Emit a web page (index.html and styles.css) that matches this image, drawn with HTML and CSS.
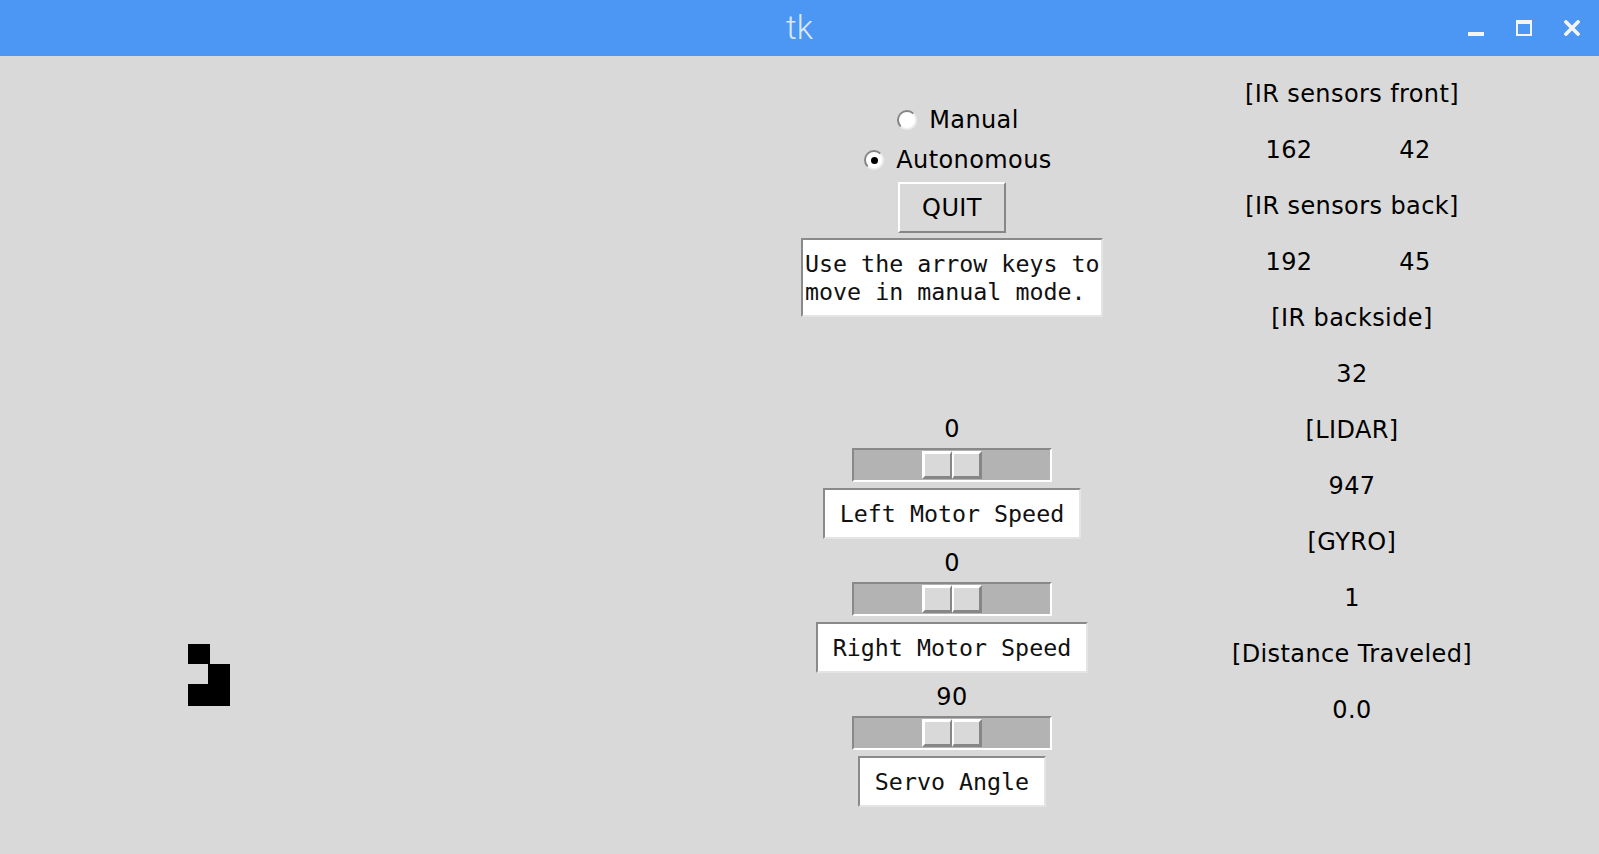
FILE: index.html
```
<!DOCTYPE html>
<html>
<head>
<meta charset="utf-8">
<title>tk</title>
<link rel="stylesheet" href="styles.css">
</head>
<body>
<div class="window">
  <div class="titlebar">
    <div class="tb-spacer"></div>
    <div class="title">tk</div>
    <div class="wm-controls">
      <span class="ctl ctl-min"></span>
      <span class="ctl ctl-max"></span>
      <svg class="ctl ctl-close" width="16" height="16" viewBox="0 0 16 16">
        <path d="M2 2 L14 14 M14 2 L2 14" stroke="#f4f4f4" stroke-width="3.6" stroke-linecap="square" fill="none"/>
      </svg>
    </div>
  </div>
  <div class="main">
    <div class="canvas">
      <svg class="robot" width="42" height="62" viewBox="0 0 42 62" shape-rendering="crispEdges">
        <rect x="0" y="0" width="22" height="20" fill="#000"/>
        <rect x="20" y="20" width="22" height="20" fill="#000"/>
        <rect x="0" y="40" width="42" height="22" fill="#000"/>
      </svg>
    </div>
    <div class="control-col">
      <div class="radio"><span class="radio-ind"></span><span class="sans">Manual</span></div>
      <div class="radio"><span class="radio-ind checked"><span class="dot"></span></span><span class="sans">Autonomous</span></div>
      <div class="button sans">QUIT</div>
      <div class="textbox mono">Use the arrow keys to
move in manual mode.</div>
      <div class="scale-group first">
        <div class="scale-value sans">0</div>
        <div class="trough"><div class="slider"><span class="half half-l"></span><span class="half half-r"></span></div></div>
        <div class="scale-label mono">Left Motor Speed</div>
      </div>
      <div class="scale-group">
        <div class="scale-value sans">0</div>
        <div class="trough"><div class="slider"><span class="half half-l"></span><span class="half half-r"></span></div></div>
        <div class="scale-label mono">Right Motor Speed</div>
      </div>
      <div class="scale-group">
        <div class="scale-value sans">90</div>
        <div class="trough"><div class="slider"><span class="half half-l"></span><span class="half half-r"></span></div></div>
        <div class="scale-label mono">Servo Angle</div>
      </div>
    </div>
    <div class="sensors sans">
      <div class="cell span2">[IR sensors front]</div>
      <div class="cell">162</div>
      <div class="cell">42</div>
      <div class="cell span2">[IR sensors back]</div>
      <div class="cell">192</div>
      <div class="cell">45</div>
      <div class="cell span2">[IR backside]</div>
      <div class="cell span2">32</div>
      <div class="cell span2">[LIDAR]</div>
      <div class="cell span2">947</div>
      <div class="cell span2">[GYRO]</div>
      <div class="cell span2">1</div>
      <div class="cell span2">[Distance Traveled]</div>
      <div class="cell span2">0.0</div>
    </div>
  </div>
</div>
</body>
</html>
```
FILE: styles.css
```
html, body {
  margin: 0;
  padding: 0;
  overflow: hidden;
  background: #d9d9d9;
}

.window {
  width: 1599px;
  height: 854px;
  display: flex;
  flex-direction: column;
}

.titlebar {
  height: 56px;
  flex: 0 0 56px;
  background: #4c97f4;
  display: grid;
  grid-template-columns: 1fr auto 1fr;
  align-items: center;
}

.title {
  font-family: Roboto, "DejaVu Sans", sans-serif;
  font-weight: 300;
  font-size: 33px;
  line-height: 1;
  color: #dce8fb;
  padding-bottom: 2px;
}

.wm-controls {
  justify-self: end;
  display: flex;
  align-items: center;
  gap: 32px;
  padding-right: 19px;
}

.ctl {
  display: block;
  width: 16px;
  height: 16px;
  box-sizing: border-box;
}

.ctl-min {
  border-bottom: 4px solid #f4f4f4;
}

.ctl-max {
  border: 2px solid #f4f4f4;
  border-top-width: 4px;
}

.main {
  flex: 1 1 auto;
  display: flex;
  background: #d9d9d9;
  overflow: hidden;
}

.canvas {
  width: 801px;
  flex: 0 0 801px;
  position: relative;
}

.robot {
  position: absolute;
  left: 188px;
  top: 588px;
}

.sans {
  font-family: "DejaVu Sans", Verdana, sans-serif;
  font-size: 24px;
  letter-spacing: 0.4px;
  color: #000;
}

.mono {
  font-family: "DejaVu Sans Mono", monospace;
  font-size: 23.3px;
  line-height: 28px;
  color: #111;
  white-space: pre;
}

.control-col {
  width: 302px;
  flex: 0 0 302px;
  display: flex;
  flex-direction: column;
  align-items: center;
  padding-top: 44px;
}

.radio {
  height: 40px;
  display: flex;
  align-items: center;
  justify-content: center;
  gap: 12px;
  padding-left: 12px;
  align-self: stretch;
  line-height: 28px;
}

.radio-ind {
  width: 20px;
  height: 20px;
  box-sizing: border-box;
  border-radius: 50%;
  background: #fff;
  border: 2px solid;
  border-color: #858585 #eeeeee #eeeeee #858585;
  display: flex;
  align-items: center;
  justify-content: center;
}

.dot {
  width: 7px;
  height: 7px;
  border-radius: 50%;
  background: #000;
}

.button {
  margin-top: 2px;
  width: 108px;
  height: 51px;
  box-sizing: border-box;
  border: 2px solid;
  border-color: #ffffff #878787 #878787 #ffffff;
  background: #d9d9d9;
  display: flex;
  align-items: center;
  justify-content: center;
  line-height: 28px;
}

.textbox {
  margin-top: 5px;
  width: 302px;
  box-sizing: border-box;
  background: #fff;
  border: 2px solid;
  border-color: #8a8a8a #e4e4e4 #e4e4e4 #8a8a8a;
  padding: 10px 0 9px 2px;
  overflow: visible;
}

.scale-group {
  display: flex;
  flex-direction: column;
  align-items: center;
}

.scale-group.first {
  margin-top: 88px;
}

.scale-value {
  height: 43px;
  box-sizing: border-box;
  padding-top: 10px;
  line-height: 28px;
}

.trough {
  width: 200px;
  height: 34px;
  box-sizing: border-box;
  border: 2px solid;
  border-color: #898989 #ffffff #ffffff #898989;
  background: #b3b3b3;
  display: flex;
  justify-content: center;
  align-items: flex-start;
}

.slider {
  margin-top: 1px;
  width: 60px;
  height: 28px;
  display: flex;
}

.half {
  flex: 1 1 0;
  box-sizing: border-box;
  background: #d9d9d9;
  border-style: solid;
  border-color: #ffffff #868686 #868686 #ffffff;
}

.half-l {
  border-width: 3px 2px 3px 3px;
}

.half-r {
  border-width: 3px 3px 3px 2px;
}

.scale-label {
  margin-top: 6px;
  background: #fff;
  border: 2px solid;
  border-color: #8a8a8a #e4e4e4 #e4e4e4 #8a8a8a;
  padding: 10px 15px 9px 15px;
}

.sensors {
  margin-left: 123px;
  width: 252px;
  flex: 0 0 252px;
  padding-top: 10px;
  display: grid;
  grid-template-columns: 126px 126px;
  grid-auto-rows: 56px;
  align-content: start;
}

.cell {
  display: flex;
  align-items: center;
  justify-content: center;
  white-space: nowrap;
}

.span2 {
  grid-column: span 2;
}
```
